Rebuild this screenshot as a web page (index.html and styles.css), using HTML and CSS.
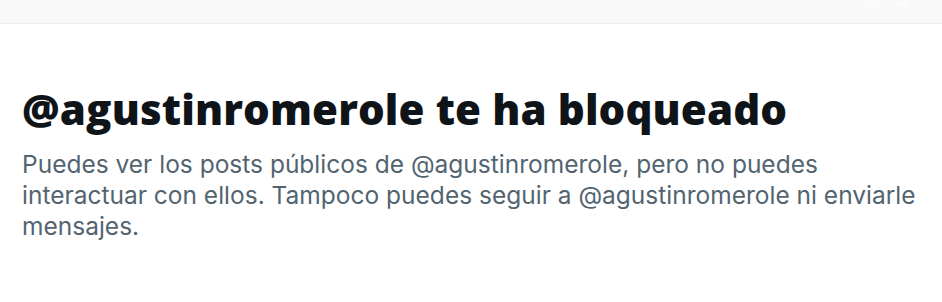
FILE: index.html
```html
<!DOCTYPE html>
<html lang="es">
<head>
<meta charset="utf-8">
<link rel="stylesheet" href="styles.css">
</head>
<body>
<div class="topbar">
  <span class="tb-icon"></span>
  <span class="tb-icon"></span>
</div>
<main class="blocked">
  <h1 class="title">@agustinromerole te ha bloqueado</h1>
  <p class="desc">Puedes ver los posts públicos de @agustinromerole, pero no puedes interactuar con ellos. Tampoco puedes seguir a @agustinromerole ni enviarle mensajes.</p>
</main>
</body>
</html>
```
FILE: styles.css
```css
html, body {
  margin: 0;
  padding: 0;
  background: #ffffff;
}
body {
  width: 942px;
  height: 302px;
  overflow: hidden;
  font-family: "Open Sans", "Noto Sans", sans-serif;
}
.topbar {
  height: 23px;
  background: #f9f9f9;
  border-bottom: 1px solid #ececec;
  display: flex;
  justify-content: flex-end;
  gap: 20px;
  padding-right: 36px;
}
.tb-icon {
  width: 8px;
  height: 4px;
  border: 1px solid #ffffff;
  border-top: none;
  border-radius: 0 0 4px 4px;
}
.blocked {
  padding: 61px 22px 0 22px;
}
.title {
  margin: 0;
  font-size: 42px;
  line-height: 48px;
  font-weight: 800;
  letter-spacing: 0.12px;
  color: #0f1419;
}
.desc {
  margin: 16px 0 0 0;
  font-family: Inter, "Open Sans", sans-serif;
  font-size: 24.5px;
  line-height: 31px;
  color: #536471;
  max-width: 898px;
}
```
